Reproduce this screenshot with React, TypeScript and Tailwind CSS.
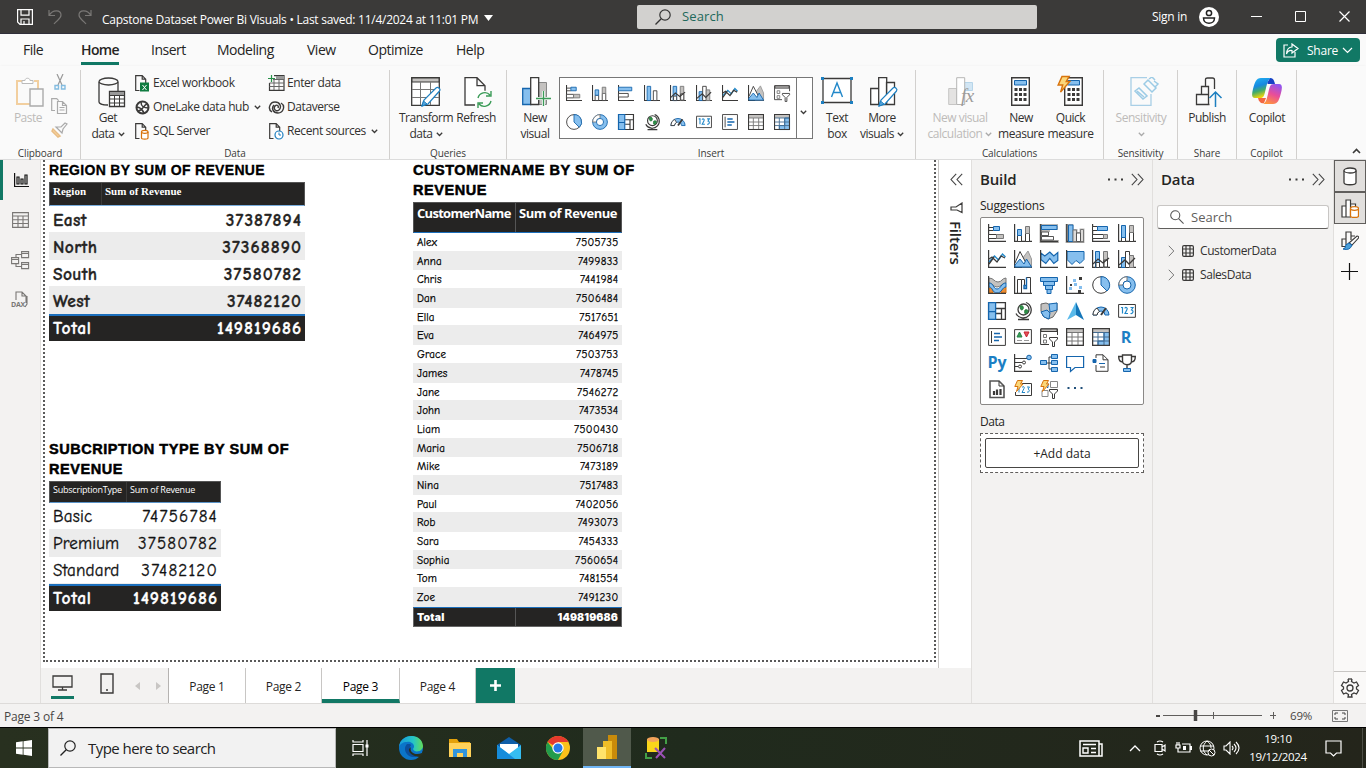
import React from "react";

type Kids = { children?: React.ReactNode };
const K = "#3b3a39";
const D = "#1565ad";
const L = "#86bfee";
const G = "#c4c2c0";
const O = "#d8730c";

function Svg({ w, h, vb, className = "", children }: Kids & { w: number; h?: number; vb?: string; className?: string }) {
  return (
    <svg width={w} height={h ?? w} viewBox={vb ?? `0 0 ${w} ${h ?? w}`} fill="none" stroke={K} className={`shrink-0 ${className}`}>
      {children}
    </svg>
  );
}

const axis = <path d="M.6 0V17.4H18" strokeWidth="1.200" />;
const bolt = <path d="M3.5.5h5L6.5 4H9L2.5 11.5 4 6.500H.8z" fill="#fbd77a" stroke={O} />;
const funnel = <path d="M9.500 9.500h8v1.500l-3 3v4.500h-2V14l-3-3z" fill="#fff" />;

const glyphs: Record<string, React.ReactNode> = {
  stackedBar: <>{axis}<path d="M.5 3.500h5M.5 6.500h5" /><path d="M5.500 2.500h6v4h-6z" fill={L} stroke={D} /><path d="M.5 10.500h8v4h-8z" fill="#fff" /><path d="M8.500 10.500h7v4h-7z" fill={G} stroke="#777" /></>,
  stackedCol: <>{axis}<path d="M3.500 11.500h4v6h-4zM11.500 9.500h4v8h-4z" fill="#fff" /><path d="M3.500 5.500h4v6h-4z" fill={L} stroke={D} /><path d="M11.500 2.500h4v7h-4z" fill={G} stroke="#777" /></>,
  clusterBar: <>{axis}<path d="M.5 2.500h15v4H.5z" fill={L} stroke={D} /><path d="M.5 9.500h11v4H.5z" fill="#fff" /></>,
  clusterCol: <>{axis}<path d="M3.500 1.500h4v16h-4z" fill={L} stroke={D} /><path d="M10.500 6.500h4v11h-4z" fill="#fff" /></>,
  clusterBarSel: <><path d="M-.500 0h18.500v6h-8v2h-1v5h5v3h5v3H-.500z" fill="#b9b7b5" stroke="none" /><path d="M.8 0V17.500H18" strokeWidth="1.300" /><path d="M1.500 1.500h15.500v4H1.500z" fill={L} stroke={D} /><path d="M1.500 8h7v3.500h-7zM1.500 12.500h12v3.500h-12z" fill="#fff" stroke="#555" /></>,
  clusterColSel: <><path d="M-.500 0h8v5h4v3h2V4.500h5V19H-.500z" fill="#b9b7b5" stroke="none" /><path d="M.8 0V17.500H18" strokeWidth="1.300" /><path d="M2.500 1h4.500v16.500H2.500z" fill={L} stroke={D} /><path d="M7 6h3.500v11.500H7zM14.500 5.500h3v12h-3z" fill="#dddbd9" stroke="#777" /><path d="M10.500 9h4v8.500h-4z" fill="#fff" stroke="#555" /></>,
  fullBar: <>{axis}<path d="M.5 2.500h5v4h-5zM.5 10.500h11v4H.5z" fill="#fff" /><path d="M5.500 2.500h10v4h-10z" fill={L} stroke={D} /><path d="M11.500 10.500h4v4h-4z" fill={G} stroke="#777" /></>,
  fullCol: <>{axis}<path d="M3.500 11.500h4v6h-4zM11.500 7.500h4v10h-4z" fill="#fff" /><path d="M3.500 1.500h4v12h-4z" fill={L} stroke={D} /><path d="M11.500 1.500h4v7h-4z" fill={G} stroke="#777" /></>,
  line: <>{axis}<path d="M1 12 6.500 6l4 4 4-6 3 3" stroke="#2188c9" strokeWidth="1.400" /><path d="m1 9 3-2 5 5 4-6 4 2M1 14l5-7" strokeWidth="1.300" /></>,
  area: <>{axis}<path d="m8 9 6-8 3.500 8v8H8z" fill={G} stroke="#999" /><path d="M1 13 6 1.500 12 13" fill="#fff" /><path d="m1 15 5-6 4 5 2.500-5 5 8H1z" fill={L} stroke={D} /></>,
  stackArea: <><path d="m.8 3 4 3 5-4 4 4 4-3.500v8l-4 3-4-5-4 5-5-4z" fill={L} stroke={D} strokeWidth="1.200" />{axis}</>,
  fullArea: <><path d="M1 1.500h17v8l-4 4-4-3-4 4-5-5z" fill={L} stroke={D} />{axis}</>,
  lineStack: <>{axis}<path d="M3.500 1.500h4v16h-4z" fill={L} stroke={D} /><path d="M11.500 1.500h4v16h-4z" fill={G} stroke="#777" /><path d="M4 12.500h3.500v5H4zM12 10h3.500v7H12z" fill="#fff" /><path d="m1 14 5-5 5 4 6-5" strokeWidth="1.300" /></>,
  lineCluster: <>{axis}<path d="M3.500 7.500h4v10h-4z" fill={L} stroke={D} /><path d="M7.500 1.500h4v16h-4z" fill="#fff" /><path d="M11.500 5.500h4v12h-4z" fill={G} stroke="#777" /><path d="m1 15 6-5 4 4 6-6" strokeWidth="1.300" /></>,
  ribbon: <><path d="M1 2c5 0 5 4 9 4s4-4 8-4v5c-4 0-5 4-9 4s-4-4-8-4z" fill={G} stroke="#777" /><path d="M1 12h4v5H1zM13 11h5v6h-5z" fill="#e98b35" stroke={O} /><path d="M1 7c5 0 4 6 8 6s4-6 9-6v4c-4 0-4 6-9 6s-4-6-8-6z" fill={L} stroke={D} />{axis}</>,
  waterfall: <>{axis}<path d="M3.500 17V3.500h4V17M7.500 3.500h3v9M12.500 1.500h4v16M12.500 1.500v9" fill="none" /><path d="M10 9.500h2.500v3H10zM12.500 1.500v9" fill={L} stroke={D} strokeWidth="1.400" /></>,
  funnel: <path d="M.5 1.500h17v4H.5zM3.500 5.500h11v4h-11zM5.500 9.500h7v4h-7zM7 13.500h4v4H7z" fill={L} stroke={D} />,
  scatter: <>{axis}<path d="M7 3h3v3H7zM3 11h3v3H3zM13 10h3v3h-3zM8 7h3v3H8z" fill={L} stroke="none" /><path d="M13 1h3v3h-3zM12 14h3v3h-3zM4 8h2v2H4z" fill={K} stroke="none" /></>,
  pie: <><circle cx="9" cy="9" r="8.300" fill="#fff" /><path d="M9 .7V9l6 6A8.300 8.300 0 0 0 9 .7z" fill={L} stroke={D} /></>,
  donut: <><circle cx="9" cy="9" r="8.300" fill={L} stroke={D} /><path d="M9 .7A8.300 8.300 0 0 0 .7 9H5a4 4 0 0 1 4-4z" fill="#fff" stroke="#777" /><circle cx="9" cy="9" r="4" fill="#fff" stroke={D} /></>,
  treemap: <><path d="M.6.6h16.800v16.800H.6zM8 6.500h9.500M8 11.500h5.500M13.500 6.500v11" fill="#fff" strokeWidth="1.300" /><path d="M.6.6h7v9h-7zM.6 9.600h7v7.800h-7z" fill={L} stroke={D} strokeWidth="1.300" /></>,
  globe: <><circle cx="9.500" cy="7.500" r="5.500" fill="#fff" strokeWidth="1.300" /><path d="M6 4c3-1 4 1 3 3s-3 1-3-3zM11 8c3-1 4 1 2 3s-3 0-2-3z" fill="#2b9348" stroke="#2b7a3d" /><path d="M12 .5a8 8 0 1 1-10 11M9 15.500v2M4 17.500h11" strokeWidth="1.300" /></>,
  shape: <><path d="m1 2 5-1 5 2 6-2v8l-4 6-5 2-5-3-2-5z" fill={G} stroke="#666" /><path d="m1 10 6-2 3 3-1 6-5-2zM9 2l8-1v7l-7 2z" fill={L} stroke={D} /></>,
  azure: <><path d="M10 0 18 18 10 13z" fill="#1476b9" stroke="none" /><path d="M10 0v13L1 18z" fill="#59b9ea" stroke="none" /></>,
  gauge: <><path d="M1 13a8 8 0 0 1 16 0h-4a4 4 0 0 0-8 0z" fill={L} stroke={D} /><path d="M1 13a8 8 0 0 1 4-7l2.500 3.500A4 4 0 0 0 5 13z" fill="#fff" /><path d="m9 13 5-7" strokeWidth="2" /></>,
  card: <><path d="M.6 2.500h16.800v12.800H.6z" fill="#fff" /><path d="M3 5.500h1.500v6M7 6.500c0-2 3-1 2 1l-2 4h3M12.500 5.500H15l-1.500 2.500c3 1 1 4-1 3.500" stroke="#2188c9" strokeWidth="1.200" /></>,
  multi: <><path d="M.6.6h16.800v16.800H.6z" fill="#fff" /><path d="M3.500 3v12" /><path d="M6 5.500h6M6 9h8M6 12.500h5" stroke={D} strokeWidth="1.700" /></>,
  kpi: <><path d="M.6 1.600h16.800v13.800H.6z" fill="#fff" /><path d="m3 9 2.500-5L8 9z" fill="#3aa25a" stroke="#278146" /><path d="m10 4 2.500 5L15 4z" fill="#e8505b" stroke="#c4262e" /><path d="M3 12.500h5M10 12.500h5" stroke="#999" /></>,
  slicer: <><path d="M17.500 7V.8H.6v15.700H9" fill="#fff" /><path d="M1 1h16v2.500H1z" fill={G} /><path d="M3.500 6.500h3v3h-3zM3.500 12h3v3h-3z" stroke="#777" />{funnel}</>,
  table: <><path d="M.6.6h16.800v16.800H.6z" fill="#fff" /><path d="M1 1h16v3.500H1z" fill={G} stroke="none" /><path d="M.6 4.500h17M.6 9h17M.6 13h17M6 4.500v13M12 4.500v13" stroke="#777" /><path d="M.6.6h16.800v16.800H.6z" strokeWidth="1.200" /></>,
  matrix: <><path d="M.6.6h16.800v16.800H.6z" fill="#fff" /><path d="M1 1h16v3.500H1z" fill={G} stroke="none" /><path d="M12 4.500h5.500v13H6V13h6z" fill={L} stroke={D} /><path d="M.6 4.500h17M.6 9h17M.6 13h17M6 4.500v13M12 4.500v13" stroke="#456d91" /><path d="M.6.6h16.800v16.800H.6z" strokeWidth="1.200" /></>,
  r: <text x="8" y="15" textAnchor="middle" fill="#1c7fc4" stroke="none" className="text-[16px] font-bold">R</text>,
  py: <text x="9" y="14" textAnchor="middle" fill="#1c7fc4" stroke="none" className="text-[16px] font-bold">Py</text>,
  influencers: <>{axis}<path d="M1 4.500h12M1 8.500h7M1 12.500h3" /><circle cx="15" cy="3.500" r="2.300" fill={L} stroke={D} /><circle cx="10" cy="8.500" r="1.500" /><circle cx="6" cy="12.500" r="1.500" /></>,
  decomp: <><path d="M6 9h6M9 3v12M9 3h3M9 15h3" /><path d="M.5 6.500h6v4h-6zM11.500.5h6v4h-6zM11.500 6.500h6v4h-6zM11.500 13.500h6v4h-6z" fill={L} stroke={D} /></>,
  qna: <path d="M.6 2.500h17v11H9l-4.500 4v-4H.6z" fill="#fff" stroke={D} strokeWidth="1.200" />,
  narrative: <><path d="M4 4V.8h7l5 5v11.500H4V11" fill="#fff" /><path d="M11 .8v5h5M8 13h5" /><path d="M1 5.500h3v3H1z" fill={D} stroke={D} /><path d="M7 9.500h6" stroke={D} /></>,
  trophy: <><path d="M4.500 1h9v6c0 5-9 5-9 0zM4.500 2.500H.7c0 4 1 5.500 4 5.500M13.500 2.500h3.800c0 4-1 5.500-4 5.500M9 11v4" strokeWidth="1.400" fill="#fff" /><path d="M5.500 14.500h7v3h-7z" fill={L} stroke={D} /></>,
  paginated: <><path d="M2 1h9l5 5v11.500H2z" fill="#fff" stroke="#555" strokeWidth="1.600" /><path d="M11 1v5h5" /><path d="M6 15v-4M9 15V9.500M12.500 15v-6" strokeWidth="2.200" /></>,
  cardNew: <><path d="M8 3.500h9.500v12H1.500V12" fill="#fff" /><path d="M5 7v5.500M8 7.500c1-1.500 3-1 2 1L8 12.500h3M13 7h2.500L14 9c2.500 1 1 4-1 3" stroke="#2188c9" />{bolt}</>,
  slicerNew: <><path d="M10.500 1.500h7v6h-7zM2 10.500h6v6H2z" stroke="#888" /><path d="M7 7.500h1v-4" stroke={D} />{bolt}{funnel}</>,
  more: <path d="M1.500 8h2M8 8h2M14.500 8h2" stroke="#1f4e79" strokeWidth="1.800" />,
};

const ribbonGallery = ["stackedBar", "stackedCol", "clusterBar", "clusterCol", "lineStack", "lineCluster", "line", "area", "slicer", "pie", "donut", "treemap", "globe", "gauge", "card", "multi", "table", "matrix"];
const buildGallery = ["stackedBar", "stackedCol", "clusterBarSel", "clusterColSel", "fullBar", "fullCol", "line", "area", "stackArea", "fullArea", "lineStack", "lineCluster", "ribbon", "waterfall", "funnel", "scatter", "pie", "donut", "treemap", "globe", "shape", "azure", "gauge", "card", "multi", "kpi", "slicer", "table", "matrix", "r", "py", "influencers", "decomp", "qna", "narrative", "trophy", "paginated", "cardNew", "slicerNew", "more"];

const Glyph = ({ name, size }: { name: string; size: number }) => (
  <Svg w={size} vb="0 0 18 18" className="overflow-visible">{glyphs[name]}</Svg>
);

const Down = ({ c = K }: { c?: string }) => (
  <Svg w={7} h={5}><path d="m.8.8 2.700 2.700L6.200.8" stroke={c} strokeWidth="1.300" /></Svg>
);
const Search = ({ s = 16, c = "#222", flip = false }: { s?: number; c?: string; flip?: boolean }) => (
  <Svg w={s} vb="0 0 16 16" className={flip ? "-scale-x-100" : ""}><circle cx="6" cy="6" r="5.200" stroke={c} strokeWidth="1.200" /><path d="m9.800 9.800 5.700 5.700" stroke={c} strokeWidth="1.300" /></Svg>
);
const Pencil = ({ x, y }: { x: number; y: number }) => (
  <g transform={`translate(${x} ${y})`}>
    <path d="m1 19 2-6L15 1c2-1.500 5 1 3.500 3L7 17z" fill="#fff" stroke="#1d7fc0" strokeWidth="1.200" />
    <path d="m1 19 1.500-5 3.500 3z" fill="#58a6dd" stroke="#1d7fc0" />
  </g>
);
const Chevrons = ({ left = false }: { left?: boolean }) => (
  <Svg w={13} h={13} className={left ? "rotate-180" : ""}><path d="m.8.8 5.200 5.700-5.200 5.700M6.800.8 12 6.500l-5.200 5.700" stroke="#444" strokeWidth="1.100" /></Svg>
);

const Group = ({ label, className, children }: Kids & { label: string; className: string }) => (
  <section className={`flex shrink-0 flex-col border-r border-[#d2d0ce] ${className}`}>
    <div className="flex h-[77px] pt-1">{children}</div>
    <div className="text-center text-[10px] leading-[12px] tracking-[-0.01em] text-[#3b3a39]"><span className="inline-block pt-[1px]">{label}</span></div>
  </section>
);
const Big = ({ icon, a, b, down, className, off }: { icon: React.ReactNode; a: string; b?: string; down?: boolean; className: string; off?: boolean }) => (
  <div className={`flex shrink-0 flex-col items-center whitespace-nowrap text-[12px] leading-4 tracking-[-0.04em] ${off ? "text-[#bdbbb9]" : "text-[#323130]"} ${className}`}>
    <div className="flex h-9 items-start justify-center pt-[3px]">{icon}</div>
    <span>{a}</span>
    <span className="flex h-4 items-center gap-[3px]">{b}{down && <Down c={off ? "#aaa" : K} />}</span>
  </div>
);
const Small = ({ icon, t, down }: { icon: React.ReactNode; t: string; down?: boolean }) => (
  <div className="flex h-6 items-center whitespace-nowrap text-[12px] tracking-[-0.035em] text-[#323130]">
    <span className="mr-[3px] flex w-4 shrink-0 justify-center">{icon}</span>{t}{down && <span className="ml-[5px]"><Down /></span>}
  </div>
);

const tabs: [string, string][] = [["File", "w-[58px]"], ["Home", "w-[70px]"], ["Insert", "w-[66px]"], ["Modeling", "w-[90px]"], ["View", "w-[61px]"], ["Optimize", "w-[88px]"], ["Help", "w-[60px]"]];

const Calc = () => (
  <Svg w={19} h={29}>
    <path d="M.7.7h17.600v27.600H.7z" fill="#fff" strokeWidth="1.400" /><path d="M3.500 3.500h12v4.500h-12z" fill={L} stroke={D} />
    <path d="M3.500 12.500h12M3.500 17.500h12M3.500 22.500h12" strokeWidth="3" strokeDasharray="3 1.500" />
  </Svg>
);
const Doc = ({ children }: Kids) => (
  <Svg w={16} h={17}><path d="M5.500 15.500H1.700V.7h6.500l3.500 3.500v4M8.200.7v3.500h3.500" strokeWidth="1.200" />{children}</Svg>
);

function Ribbon() {
  return (
    <div className="flex h-[94px] shrink-0 border-b border-[#dcdcdc] bg-[#fafafa] pt-[4px] shadow-sm">
      <Group label="Clipboard" className="w-[81px]">
        <Big off className="w-[56px]" a="Paste" icon={<Svg w={28} h={31} className="translate-x-[2px]"><path d="M6 4H1v23h13" stroke="#f2cf9f" strokeWidth="2" /><path d="M18 4h4v8" stroke="#f2cf9f" strokeWidth="2" /><path d="M6 6.500v-3h3c0-3 5-3 5 0h3v3z" fill="#fff" stroke="#bbb" /><path d="M14 12h13v17H14z" fill="#fafafa" stroke="#aaa" strokeWidth="1.400" /></Svg>} />
        <div className="-ml-[5px] -mt-1 flex flex-col items-center gap-2 pt-[4px]">
          <Svg w={16}><path d="m5 0 5 11M11 0 6 11" stroke="#999" strokeWidth="1.200" /><path d="M3 11.500h3.500V15H3zM9.500 11.500H13V15H9.500z" stroke="#83bce0" strokeWidth="1.400" /></Svg>
          <Svg w={17} h={16}><path d="M4 12.500H.7V.7h5l2 2M6.500 3.500h5l4 4v8h-9zM11.500 3.500v4h4M8.500 9.500h5M8.500 12h5" stroke="#aaa" strokeWidth="1.200" /></Svg>
          <Svg w={17} h={16}><path d="m2 7 7 7-2 1-6-6z" fill="#fbd9aa" stroke="#e8bd85" strokeWidth="1.500" /><path d="m5 5 6 6 1-4 4-5-2-1-4 4z" fill="#fafafa" stroke="#aaa" strokeWidth="1.200" /></Svg>
        </div>
      </Group>
      <Group label="Data" className="w-[309px]">
        <Big className="w-[54px]" a="Get" b="data" down icon={<Svg w={29} h={31} className="translate-x-[3px]"><path d="M2 5v20c0 2 5 3 9 3M21 5v9" strokeWidth="1.300" /><ellipse cx="11.500" cy="4.500" rx="9.500" ry="3.500" strokeWidth="1.300" /><path d="M12.500 14.500h15v15h-15z" fill="#fff" strokeWidth="1.300" /><path d="M13 15h14v3H13z" fill="#999" stroke="none" /><path d="M12.500 18.500h15M12.500 22h15M12.500 26h15M17.500 18v11M22.500 18v11" /></Svg>} />
        <div className="-ml-px -mt-[3px] flex w-[134px] flex-col">
          <Small t="Excel workbook" icon={<Doc><path d="M6 7.500h9v9H6z" fill="#107c41" stroke="none" /><path d="m8.500 10 4 5m0-5-4 5" stroke="#fff" /></Doc>} />
          <Small t="OneLake data hub" down icon={<Svg w={15}><circle cx="7.500" cy="7.500" r="6" strokeWidth="2" /><path d="M1 7c5 0 7 3 8 7M6 2c0 5 3 6 8 6M3 11c5 0 5-6 9-7" strokeWidth="1.500" /></Svg>} />
          <Small t="SQL Server" icon={<Doc><path d="M7.500 9v6c0 1.500 6.500 1.500 6.500 0V9" fill="#fff" stroke={O} strokeWidth="1.200" /><ellipse cx="10.750" cy="8.800" rx="3.250" ry="1.500" fill="#fff" stroke={O} strokeWidth="1.200" /></Doc>} />
        </div>
        <div className="-mt-[3px] flex flex-col">
          <Small t="Enter data" icon={<Svg w={17} h={16}><path d="M6 .7h10v14.600H1.500V8" strokeWidth="1.200" /><path d="M8 1h8v3H8z" fill="#999" stroke="none" /><path d="M5 4.500h11M1.500 8h14.500M1.500 11.500h14.500M6 5v10M11 4v11" stroke="#666" /><path d="M3.500 0v7M0 3.500h7" stroke="#279048" strokeWidth="1.200" /></Svg>} />
          <Small t="Dataverse" icon={<Svg w={17} h={15}><path d="M4 12C-1 9 2 2 7 2c5 0 7 5 4 8-3 2-6-1-4-4 2-2 4 0 3 2M13 3c5 3 2 10-3 10-5 0-7-5-4-8" strokeWidth="1.400" /></Svg>} />
          <Small t="Recent sources" down icon={<Doc><circle cx="11" cy="12" r="4" fill="#fff" stroke="#1d7fc0" strokeWidth="1.200" /><path d="M11 9.500V12h2" stroke="#1d7fc0" /></Doc>} />
        </div>
      </Group>
      <Group label="Queries" className="w-[117px]">
        <Big className="w-[72px]" a="Transform" b="data" down icon={<Svg w={30} h={31}><path d="M.7.7h27.600v27.600H.7z" fill="#fff" strokeWidth="1.300" /><path d="M1 1h27v4H1z" fill={G} /><path d="M1 12.500h27M1 20.500h27M9.500 5v23M19.500 5v23" stroke="#777" /><Pencil x={10} y={10} /></Svg>} />
        <Big className="w-[28px]" a="Refresh" icon={<Svg w={28} h={31} className="translate-x-[2px]"><path d="M11 28H1V.7h12l8 8v5M13 .7v8h8" strokeWidth="1.300" fill="#fff" /><path d="M14 21a7 7 0 0 1 12-3M27 24a7 7 0 0 1-12 3M27 14v5h-5M14 31v-5h5" stroke="#3a9b57" strokeWidth="1.400" /></Svg>} />
      </Group>
      <Group label="Insert" className="w-[409px]">
        <Big className="mr-[-4px] w-[56px]" a="New" b="visual" icon={<Svg w={29} h={31} className="translate-x-px"><path d="M.7 11.500h8v16h-8z" fill={L} stroke={D} strokeWidth="1.300" /><path d="M16.500 5.500h8v22h-8z" fill={G} stroke="#888" /><path d="M8.700.7h8v26.800h-8z" fill="#fff" strokeWidth="1.300" /><path d="M21.500 14v15M14 21.500h15" stroke="#fafafa" strokeWidth="3" /><path d="M21.500 14v15M14 21.500h15" stroke="#3a9b57" strokeWidth="1.300" /></Svg>} />
        <div className="mt-[3px] flex h-[62px] w-[254px] border border-[#777] bg-white">
          <div className="grid w-[236px] grid-cols-[repeat(9,26px)] content-start gap-y-[13px] pl-[6px] pt-[7px]">
            {ribbonGallery.map((n) => <Glyph key={n} name={n} size={16} />)}
          </div>
          <div className="flex w-[16px] shrink-0 items-center justify-center border-l border-[#777] pr-[2px] pt-2"><Down /></div>
        </div>
        <Big className="w-[48px]" a="Text" b="box" icon={<Svg w={32} h={27}><path d="M2 1.500h28v24H2z" fill="#fff" strokeWidth="1.300" /><path d="M0 0h3v3H0zM29 0h3v3h-3zM0 24h3v3H0zM29 24h3v3h-3z" fill="#1d7fc0" stroke="none" /><path d="m10.500 20 5.500-14 5.500 14M12.500 15.500h7" stroke="#2188c9" strokeWidth="1.400" /></Svg>} />
        <Big className="w-[42px]" a="More" b="visuals" down icon={<Svg w={29} h={31} className="translate-x-[2px]"><path d="M.7 11.500h8v16h-8zM16.500 5.500h8v22h-8zM8.700.7h8v26.800h-8z" fill="#fff" strokeWidth="1.300" /><Pencil x={8} y={10} /></Svg>} />
      </Group>
      <Group label="Calculations" className="w-[188px]">
        <Big off className="w-[88px]" a="New visual" b="calculation" down icon={<Svg w={29} h={31} className="translate-x-[2px]"><path d="M.7 11.500h8v16h-8z" fill="#e4e3e2" stroke="#c6c5c4" /><path d="M16.500 5.500h8v8h-8z" fill="#d2e6f4" stroke="#b6d5e9" /><path d="M8.700.7h8v26.800h-8z" fill="#fff" stroke="#b6b5b4" /><text x="13" y="25" fill="#9c9b9a" stroke="none" className="font-['Liberation_Serif'] text-[19px] italic">fx</text></Svg>} />
        <Big className="w-[34px]" a="New" b="measure" icon={<div className="-translate-x-px"><Calc /></div>} />
        <Big className="w-[65px]" a="Quick" b="measure" icon={<div className="relative pl-[5px]"><Calc /><Svg w={14} h={20} vb="0 0 9.800 13" className="absolute -top-[2px] left-[-2px] overflow-visible">{bolt}</Svg></div>} />
      </Group>
      <Group label="Sensitivity" className="w-[74px]">
        <Big off className="w-[74px]" a="Sensitivity" down icon={<Svg w={29} h={30} className="translate-x-[3px]"><path d="M17 .7H1v27.600h20V17" stroke="#a9cfe6" strokeWidth="1.300" /><path d="m5 14 4-3 8 8-4 3zM14 7l4-4 8 8-4 4zM19 2l3-2 3 3M24 4l4 3-3 3M7 14l7 6" stroke="#9ccbe5" strokeWidth="1.500" /></Svg>} />
      </Group>
      <Group label="Share" className="w-[59px]">
        <Big className="w-[58px]" a="Publish" icon={<Svg w={28} h={32} className="translate-x-[2px]"><path d="M14.500 27.500h-13v-10h5M6.500 17V9.500h4M10.500 9V2.500q0-1.500 2-1.500h5q2 0 2 2v9M13.500 27V17.500H3M13.500 17V9.500h-4" strokeWidth="1.300" /><path d="M20.500 30V15M14.500 21l6-6 6 6" stroke="#1d7fc0" strokeWidth="1.500" /></Svg>} />
      </Group>
      <Group label="Copilot" className="w-[60px]">
        <Big className="w-[60px]" a="Copilot" icon={
          <Svg w={30} h={28}>
            <defs>
              <linearGradient id="ca" x2=".3" y2="1"><stop stopColor="#23b4f3" /><stop offset=".45" stopColor="#1689e0" /><stop offset=".7" stopColor="#42ac68" /><stop offset="1" stopColor="#efd40a" /></linearGradient>
              <linearGradient id="cb" x1=".7" x2=".3" y2="1"><stop stopColor="#9155ef" /><stop offset=".5" stopColor="#e94d99" /><stop offset="1" stopColor="#ff943d" /></linearGradient>
            </defs>
            <path d="M15 6 18 1c3 0 4 2 5 6h-7z" fill="#1741c5" stroke="none" />
            <path d="M9 1h10c-3 1-4 6-5 10-2 8-2 10-6 10H3c-4 0-3-5-2-9C3 5 4 1 9 1z" fill="url(#ca)" stroke="none" />
            <path d="M21 27H11c3-1 4-6 5-10 2-8 2-10 6-10h5c4 0 3 5 2 9-2 7-3 11-8 11z" fill="url(#cb)" stroke="none" />
            <path d="M6 21h8l-2 5c-3 1-5-1-6-5z" fill="#f26743" stroke="none" />
          </Svg>} />
      </Group>
      <div className="flex flex-1 items-end justify-end pb-[5px] pr-[5px]"><Svg w={9} h={6}><path d="m1 5 3.500-3.500L8 5" strokeWidth="1.600" /></Svg></div>
    </div>
  );
}

const comic = "font-['Comic_Sans_MS','Comic_Neue','Noto_Sans',sans-serif]";
const regions = [["East", "37387894"], ["North", "37368890"], ["South", "37580782"], ["West", "37482120"]];
const plans = [["Basic", "74756784"], ["Premium", "37580782"], ["Standard", "37482120"]];
const customers = "Alex 7505735,Anna 7499833,Chris 7441984,Dan 7506484,Ella 7517651,Eva 7464975,Grace 7503753,James 7478745,Jane 7546272,John 7473534,Liam 7500430,Maria 7506718,Mike 7473189,Nina 7517483,Paul 7402056,Rob 7493073,Sara 7454333,Sophia 7560654,Tom 7481554,Zoe 7491230".split(",").map((r) => r.split(" "));

const Title = ({ wide = false, children }: Kids & { wide?: boolean }) => (
  <h2 className={`whitespace-nowrap font-['Liberation_Sans'] font-bold leading-5 text-black ${wide ? "text-[14.500px] tracking-[0.037em] [-webkit-text-stroke:0.5px_#000]" : "text-[14px] tracking-[0.023em] [-webkit-text-stroke:0.3px_#000]"}`}>{children}</h2>
);

function Canvas() {
  return (
    <div className="flex h-[508px] w-[930px] shrink-0 bg-white">
      <div className="ml-[2px] flex h-[502px] w-[893px] border-x-2 border-b-2 border-dotted border-[#5a5a5a] pl-1">
        <div className="flex w-[364px] flex-col">
          <Title>REGION BY SUM OF REVENUE</Title>
          <div className="mt-[2px] w-[256px]">
            <div className="flex h-[24px] border border-b-[#7aaede] border-[#555] bg-[#252423] font-['Liberation_Serif'] text-[11px] font-bold leading-4 text-white">
              <span className="w-[52px] border-r border-[#3a3938] pl-[3px]">Region</span><span className="pl-[3px]">Sum of Revenue</span>
            </div>
            <div className={`${comic} text-[17.500px] font-bold leading-[29px] text-[#252423] [-webkit-text-stroke:0.3px]`}>
              {regions.map(([a, b], i) => <div key={a} className={`flex h-[27px] justify-between border-b border-[#ececec] pl-1 pr-[3px] ${i % 2 ? "bg-[#ececec]" : ""}`}><span className="tracking-[0.02em]">{a}</span><span className="tracking-[0.060em]">{b}</span></div>)}
              <div className="flex h-[27px] justify-between border-t-2 border-[#1c6fbc] bg-[#252423] pl-1 pr-[3px] leading-[25px] text-white"><span className="tracking-[0.04em]">Total</span><span className="tracking-[0.055em]">149819686</span></div>
            </div>
          </div>
          <div className="mt-[98px]"><Title wide>SUBCRIPTION TYPE BY SUM OF<br />REVENUE</Title></div>
          <div className="mt-[2px] w-[172px]">
            <div className="flex h-[22px] border border-b-[#5b94c9] border-[#555] bg-[#252423] text-[9px] leading-4 tracking-[-0.025em] text-white">
              <span className="w-[77px] border-r border-[#3a3938] pl-[3px]">SubscriptionType</span><span className="pl-[3px]">Sum of Revenue</span>
            </div>
            <div className={`${comic} text-[17px] leading-[28px] text-[#111] [-webkit-text-stroke:0.300px]`}>
              {plans.map(([a, b], i) => <div key={a} className={`flex h-[27px] justify-between border-b border-[#ececec] pl-1 pr-[3px] ${i % 2 ? "bg-[#ececec]" : ""}`}><span className="tracking-[0.01em]">{a}</span><span className="tracking-[0.070em]">{b}</span></div>)}
              <div className="flex h-[27px] justify-between border-t-2 border-[#1c6fbc] bg-[#252423] pl-1 pr-[3px] text-[17.500px] font-bold leading-[25px] text-white"><span className="tracking-[0.04em]">Total</span><span className="tracking-[0.055em]">149819686</span></div>
            </div>
          </div>
        </div>
        <div className="w-[240px]">
          <Title wide>CUSTOMERNAME BY SUM OF<br />REVENUE</Title>
          <div className="mt-[2px] w-[209px]">
            <div className="flex h-[31px] whitespace-nowrap border border-b-[#1c6fbc] border-[#555] bg-[#252423] text-[13px] font-bold leading-[21px] tracking-[-0.035em] text-white">
              <span className="w-[102px] shrink-0 border-r border-[#555] pl-[3px] tracking-[-0.055em]">CustomerName</span><span className="pl-[3px]">Sum of Revenue</span>
            </div>
            <div className={`${comic} text-[11px] leading-[19.500px] text-[#000] [-webkit-text-stroke:0.250px]`}>
              {customers.map(([a, b], i) => <div key={a} className={`flex h-[18.700px] justify-between border-b border-[#ececec] pl-1 pr-[3.500px] ${i % 2 ? "bg-[#ececec]" : ""}`}><span className="tracking-[0.01em]">{a}</span><span className="tracking-[0.030em]">{b}</span></div>)}
            </div>
            <div className="flex h-[20px] border border-t-[#1c6fbc] border-[#666] bg-[#252423] font-['Inter'] text-[10.5px] font-black leading-[19px] text-white">
              <span className="w-[102px] border-r border-[#555] pl-[3px] tracking-[0.02em]">Total</span><span className="ml-auto pr-[3px] tracking-[0.01em]">149819686</span>
            </div>
          </div>
        </div>
      </div>
      <div className="ml-[2px] h-full border-l border-[#c8c6c4]" />
      <div className="flex flex-1 flex-col items-center pl-[2px] pt-[13px]">
        <Chevrons left />
        <Svg w={13} h={12} className="mt-[16px]"><path d="M12 1v9.500L7 8H1V5h5z" strokeWidth="1.200" /></Svg>
        <div className="mt-[7px] text-[15px] font-semibold leading-[18px] tracking-[-0.01em] text-[#252423] [writing-mode:vertical-rl]">Filters</div>
      </div>
    </div>
  );
}

const pages: [string, string][] = [["Page 1", "w-[77px]"], ["Page 2", "w-[76px]"], ["Page 3", "w-[78px] border-b-4 border-b-[#117865] text-black"], ["Page 4", "w-[76px]"]];

function PageTabs() {
  return (
    <div className="flex h-[35px] bg-[#f3f2f1]">
      <div className="flex w-[127px] pl-[10px]">
        <div className="flex h-[31px] w-[23px] flex-col items-center border-b-[3px] border-[#117865] pt-[7px]"><Svg w={21} h={16}><path d="M1 1h19v11H1zM10.500 12v3M6 15h9" strokeWidth="1.300" /></Svg></div>
        <Svg w={14} h={21} className="ml-[26px] mt-[5px]"><path d="M1 1h12v19H1zM6 17h2" strokeWidth="1.400" /></Svg>
        <Svg w={26} h={8} className="ml-[21px] mt-[14px]"><path d="M5 0v8L0 4zM21 0v8l5-4z" fill="#c8c6c4" stroke="none" /></Svg>
      </div>
      <div className="flex border-l border-[#b5b3b1]">
        {pages.map(([p, w]) => <div key={p} className={`border-r border-r-[#c8c6c4] bg-white pt-[10px] text-center text-[12px] leading-[17px] tracking-[-0.025em] text-[#252423] ${w}`}>{p}</div>)}
        <div className="flex w-[39px] items-center justify-center bg-[#117865]"><Svg w={11}><path d="M5.500 0v11M0 5.500h11" stroke="#fff" strokeWidth="2.600" /></Svg></div>
      </div>
    </div>
  );
}

const PaneHead = ({ t }: { t: string }) => (
  <div className="flex h-[38px] items-center pl-2 pr-[8px]">
    <span className="flex-1 text-[15px] font-semibold tracking-[-0.01em] text-[#252423]">{t}</span>
    <Svg w={15} h={3} className="mr-[8px]"><path d="M0 1.500h2M6.500 1.500h2M13 1.500h2" strokeWidth="2" /></Svg>
    <Chevrons />
  </div>
);

function Panes() {
  return (
    <>
      <aside className="flex w-[181px] shrink-0 flex-col border-l border-[#e1dfdd] bg-[#f3f2f1]">
        <PaneHead t="Build" />
        <div className="h-[19px] pl-2 text-[12px] leading-4 tracking-[-0.02em] text-[#252423]">Suggestions</div>
        <div className="ml-2 grid h-[188px] w-[164px] grid-cols-[repeat(6,26px)] content-start gap-y-2 rounded-[2px] border border-[#8a8886] bg-white pl-[7px] pt-[6px]">
          {buildGallery.map((n) => <Glyph key={n} name={n} size={18} />)}
        </div>
        <div className="mt-[9px] pl-2 text-[12px] leading-4 tracking-[-0.04em] text-[#252423]">Data</div>
        <div className="ml-2 mt-[3px] flex h-[40px] w-[164px] items-center justify-center border border-dashed border-[#605e5c] bg-white">
          <div className="h-[30px] w-[154px] rounded-[2px] border border-[#484644] bg-white text-center text-[12px] leading-[30px] text-[#252423]">+Add data</div>
        </div>
      </aside>
      <aside className="flex w-[181px] shrink-0 flex-col border-l border-[#e1dfdd] bg-[#f3f2f1]">
        <PaneHead t="Data" />
        <div className="ml-1 mt-[7px] flex h-[24px] w-[172px] items-center rounded-[3px] border border-b-[#605e5c] border-[#c8c6c4] bg-white pl-3 text-[13px] text-[#605e5c]"><Search s={14} c="#555" /><span className="ml-[7px] pt-px">Search</span></div>
        <div className="mt-[10px] flex flex-col">
          {["CustomerData", "SalesData"].map((t) => (
            <div key={t} className="flex h-6 items-center pl-[15px] text-[12px] tracking-[-0.035em] text-[#323130]">
              <Svg w={7} h={12}><path d="m.8.8 5 5.200-5 5.200" stroke="#777" /></Svg>
              <Svg w={12} className="ml-[7px] mr-[6px]"><path d="M2 .6h8q1.400 0 1.400 1.400v8q0 1.400-1.400 1.400H2Q.6 11.400.6 10V2Q.6.6 2 .6zM4 .6v10.800M8 .6v10.800M.6 4h10.800M.6 8h10.800" strokeWidth="1.200" /></Svg>{t}
            </div>
          ))}
        </div>
      </aside>
      <aside className="flex w-[33px] shrink-0 flex-col items-center border-l border-[#e1dfdd] bg-[#faf9f8]">
        <div className="flex h-8 w-full items-center justify-center border border-[#605e5c] bg-[#e1dfdd]"><Svg w={14} h={19}><path d="M1 3.500v12c0 3 12 3 12 0v-12" fill="#fff" strokeWidth="1.300" /><ellipse cx="7" cy="3.500" rx="6" ry="2.500" fill="#fff" strokeWidth="1.300" /></Svg></div>
        <div className="flex h-8 w-full items-center justify-center border border-[#605e5c] bg-[#e1dfdd]"><Svg w={18} h={19}><path d="M1 7h4v11H1zM5 1h4.500v17H5zM9.500 5h5v4" fill="#fff" strokeWidth="1.200" /><path d="M9.500 10v7c0 2 8 2 8 0v-7" fill="#fff" stroke={O} strokeWidth="1.300" /><ellipse cx="13.500" cy="9.500" rx="4" ry="1.800" fill="#fff" stroke={O} strokeWidth="1.300" /></Svg></div>
        <Svg w={18} h={20} className="mt-[7px]"><path d="M4.500 15.500H1V8h4M5 14V1h5v8M10 5h4" strokeWidth="1.200" /><path d="m8 12 8-7q2 0 1.500 2L11 14z" fill="#fff" strokeWidth="1.100" /><path d="M8 12q-4 1-4 5l-2 1q7 2 9-4z" fill="#4b9fd8" stroke={D} /></Svg>
        <Svg w={17} className="mr-px mt-[12px]"><path d="M8.500 0v17M0 8.500h17" stroke="#111" strokeWidth="1.200" /></Svg>
        <div className="mt-auto flex h-8 w-full items-center justify-center border-t border-[#c8c6c4]"><Svg w={20} vb="0 0 20 20"><path d="m8 1 .5 2.500-2.500 1.500-2.500-1L1.500 7.500 3.500 9v2l-2 1.500 2 3.500 2.500-1 2.500 1.500L8 19h4l-.5-2.500L14 15l2.500 1 2-3.500-2-1.500V9l2-1.500-2-3.500L14 5l-2.500-1.500L12 1" strokeWidth="1.300" /><path d="M8 1h4" strokeWidth="1.300" /><circle cx="10" cy="10" r="3" strokeWidth="1.300" /></Svg></div>
      </aside>
    </>
  );
}

function Rail() {
  return (
    <nav className="flex w-[41px] shrink-0 flex-col items-center border-r border-[#e1dfdd] bg-[#f3f2f1]">
      <div className="flex h-10 w-full items-center border-l-[3px] border-[#117865] pl-[11px]"><Svg w={15} h={15}><path d="M.6 0v13.500H15M3 4h2v7H3zM7 6h2v5H7zM11 2h2v9h-2z" stroke="#111" strokeWidth="1.200" /></Svg></div>
      <div className="flex h-10 items-center pl-px"><Svg w={17} h={16}><path d="M.6.6h15.800v14.800H.6zM.6 4h15.800M.6 7.700h15.800M.6 11.500h15.800M6 4v11M11 4v11" stroke="#797775" strokeWidth="1.100" /></Svg></div>
      <div className="flex h-10 items-center pl-px"><Svg w={19} h={19}><path d="M.6 6.600h7v6h-7zM.6 8.500h7M10.600.6h7v6h-7zM10.600 2.500h7M10.600 11.600h7v6h-7zM10.600 13.500h7M5 6V3.500h5.500M5 12.500v3h5.500" stroke="#797775" strokeWidth="1.100" /></Svg></div>
      <div className="flex h-10 items-center"><Svg w={19} h={18}><path d="M5 9V1h6l4 4v7M11 1v4h4M16 5v8l-2 3" stroke="#797775" strokeWidth="1.100" /><text x="0" y="16" fill="#797775" stroke="none" className="text-[7px] font-bold tracking-[-0.04em]">DAX</text></Svg></div>
    </nav>
  );
}

function Taskbar() {
  return (
    <footer className="flex h-[41px] border-t border-black bg-linear-to-r from-[#28301f] via-[#202b1d] to-[#24251b] text-white">
      <div className="flex w-[48px] items-center justify-center"><Svg w={16}><path d="m0 2.200 6.700-.9v6.200H0zM7.500 1.200 16 0v7.500H7.500zM0 8.400h6.700v6.300L0 13.800zM7.500 8.400H16V16l-8.500-1.200z" fill="#fff" stroke="none" /></Svg></div>
      <div className="flex w-[288px] items-center border border-[#b8b8b8] bg-[#f2f2f2] pl-[11px] text-[15px] tracking-[-0.037em] text-[#222]"><Search flip /><span className="ml-[12px]">Type here to search</span></div>
      <div className="flex w-[48px] items-center justify-center"><Svg w={17} h={16}><path d="M1 0v2h10V0M1 4.500h10v7H1zM1 16v-2h10v2M15 0v16" stroke="#fff" strokeWidth="1.200" /><path d="M13.500 4.500h3v3h-3z" fill="#fff" stroke="none" /></Svg></div>
      <div className="flex w-[54px] items-center justify-center"><Svg w={24}>
        <defs><linearGradient id="ea" x2="1"><stop stopColor="#169ade" /><stop offset=".6" stopColor="#26c6c5" /><stop offset="1" stopColor="#63dc57" /></linearGradient></defs>
        <circle cx="12" cy="12" r="12" fill="#0b75c9" stroke="none" /><path d="M0 11C1-3 23-4 24 10c0 6-9 7-10 3 3-3-1-8-6-7-4 0-7 2-8 5z" fill="url(#ea)" stroke="none" /><path d="M8 8c-5 5 0 14 8 13l6-3c-5 3-12-1-11-6 0-3 2-2 0-4z" fill="#0b4f9f" stroke="none" /><path d="M12 11c-2 5 4 9 11 6l1-2v3l-3 3c-6 0-12-4-11-8z" fill="#28301f" stroke="none" />
      </Svg></div>
      <div className="flex w-[44px] items-center justify-center"><Svg w={22} h={19}><path d="M0 0h8l2 3h11v15H0z" fill="#e3a10b" stroke="none" /><path d="M0 4h22v14H0z" fill="#ffd25a" stroke="none" /><path d="M4 10h14v8h-4v-4H8v4H4z" fill="#3195dc" stroke="none" /></Svg></div>
      <div className="flex w-[54px] items-center justify-center"><Svg w={24} h={22}><path d="M0 8 12 0l12 8v14H0z" fill="#0e5ea8" stroke="none" /><path d="M3 7h18v10H3z" fill="#fff" stroke="none" /><path d="m0 8 12 9L24 8v14H0z" fill="#35bdf2" stroke="none" /><path d="M0 22V8l18 14z" fill="#168cdb" stroke="none" /></Svg></div>
      <div className="flex w-[47px] items-center justify-center pr-[3px]"><Svg w={24}><circle cx="12" cy="12" r="12" fill="#fbc11a" stroke="none" /><path d="M12 12 1.600 6A12 12 0 0 1 22.400 6H12z" fill="#e5392d" stroke="none" /><path d="M1.600 6A12 12 0 0 0 12 24l5-9-9-1z" fill="#229c4c" stroke="none" /><circle cx="12" cy="12" r="5.700" fill="#fff" stroke="none" /><circle cx="12" cy="12" r="4.500" fill="#2679e8" stroke="none" /></Svg></div>
      <div className="flex w-[48px] items-center justify-center border-b-2 border-[#70b5f5] bg-[#50594b]"><Svg w={20} h={24}><path d="M11 0h9v24h-9z" fill="#c98b0a" stroke="none" /><path d="M6 6h9v18H6z" fill="#efbd28" stroke="none" /><path d="M0 12h9v12H0z" fill="#ffe36b" stroke="none" /></Svg></div>
      <div className="flex w-[50px] items-center justify-center"><Svg w={22}><path d="M2 2h12v13H2z" fill="#f9d51a" stroke="none" /><ellipse cx="8" cy="2.500" rx="6" ry="2.500" fill="#f2a35b" stroke="none" /><path d="M15 1h6v6M1 16v5h6" stroke="#43a047" strokeWidth="2" /><path d="m10 11 10 10M20 11l-9 10" stroke="#9b51b5" strokeWidth="2" /></Svg></div>
      <div className="ml-auto flex items-center">
        <Svg w={24} h={17}><path d="M1 1h19v15H1zM20 4h3v12h-3M4 4.500h13" stroke="#fff" strokeWidth="1.500" /><path d="M4 8h5v5H4zM12 8.500h5M12 12.500h5" stroke="#fff" strokeWidth="1.400" /></Svg>
        <Svg w={12} h={8} className="ml-[26px]"><path d="m1 7 5-5 5 5" stroke="#fff" strokeWidth="1.300" /></Svg>
        <Svg w={12} h={16} className="ml-[13px]"><path d="M1 4.500h7v7H1zM8 7l3-2v6L8 9M3 2q3-2 6 0M3 14q3 2 6 0" stroke="#fff" strokeWidth="1.200" /></Svg>
        <Svg w={17} h={12} className="ml-[9px]"><path d="M7 2h8v8H5M1 3h4v3H1zM2 0v3M4 0v3M3 6v4h3" stroke="#fff" strokeWidth="1.200" /><path d="M8 4h3v4H8zM15 4h2v4h-2z" fill="#fff" stroke="none" /></Svg>
        <Svg w={17} h={17} className="ml-[7px]"><circle cx="8" cy="8" r="7" stroke="#fff" /><path d="M1 6h14M1 11h8M8 1c-5 4-5 10 0 14M8 1c3 2 4 4 4 7" stroke="#fff" /><circle cx="12.500" cy="12.500" r="3.500" fill="#24251b" stroke="#fff" /><path d="m10 10 5 5" stroke="#fff" /></Svg>
        <Svg w={17} h={14} className="ml-[7px]"><path d="M1 5h2l4-4v12L3 9H1zM9 5q2 2 0 4M11 3q4 4 0 8M13 1q6 6 0 12" stroke="#fff" strokeWidth="1.100" /></Svg>
        <div className="ml-[8px] w-[60px] whitespace-nowrap pb-[1px] text-center text-[11.500px] leading-[18px] tracking-[-0.03em]">19:10<br />19/12/2024</div>
        <Svg w={17} h={17} className="ml-[17px] mr-[20px]"><path d="M1 1h15v12h-4.500L8.500 16l-3-3H1z" stroke="#fff" strokeWidth="1.200" /></Svg>
        <div className="mr-[3px] h-10 border-l border-[#4d4e46]" />
      </div>
    </footer>
  );
}

export default function App() {
  return (
    <div className="flex h-[768px] w-[1366px] flex-col overflow-hidden bg-[#f3f2f1] font-['Open_Sans','Noto_Sans',sans-serif]">
      <header className="flex h-[34px] shrink-0 items-center border-b border-[#302f3a] bg-[#3b3a39] text-[12px] tracking-[-0.022em] text-white">
        <Svg w={16} className="ml-[17px]"><path d="M.6.6h14.800v14.800H3L.6 13zM4 .6v5.500h8V.6M4 15V10h8v5M7 12v3" stroke="#fff" strokeWidth="1.200" /></Svg>
        <Svg w={14} h={16} className="ml-[15px]"><path d="M1 1v5.500h6M1 6.500C5 0 13 1 13 6c0 4-4 5-7 9" stroke="#797775" strokeWidth="1.200" /></Svg>
        <Svg w={14} h={16} className="ml-[16px] -scale-x-100"><path d="M1 1v5.500h6M1 6.500C5 0 13 1 13 6c0 4-4 5-7 9" stroke="#797775" strokeWidth="1.200" /></Svg>
        <div className="ml-[10px] flex w-[535px] items-center whitespace-nowrap pt-[7px]">Capstone Dataset Power Bi Visuals&nbsp;•&nbsp;Last saved: 11/4/2024 at 11:01 PM<Svg w={9} h={6} className="-mt-1 ml-[6px]"><path d="M0 0h9L4.500 6z" fill="#fff" stroke="none" /></Svg></div>
        <div className="flex h-6 w-[400px] shrink-0 items-center rounded-[2px] bg-[#d2d1cf] pl-[18px] text-[13px] text-[#21695b]"><Search flip c="#333" /><span className="ml-[11px] pt-px tracking-[0.01em]">Search</span></div>
        <span className="ml-[115px] w-[47px] pt-px">Sign in</span>
        <Svg w={20}><circle cx="10" cy="10" r="10" fill="#fff" stroke="none" /><circle cx="10" cy="6" r="2.600" stroke="#222" strokeWidth="1.500" /><path d="M4.500 11h11c0 7-11 7-11 0z" stroke="#222" strokeWidth="1.500" /></Svg>
        <Svg w={11} className="ml-[32px]"><path d="M0 5.500h11" stroke="#fff" /></Svg>
        <Svg w={11} className="ml-[33px]"><path d="M.5.5h10v10H.5z" stroke="#fff" /></Svg>
        <Svg w={11} className="ml-[33px]"><path d="m.5.5 10 10m0-10-10 10" stroke="#fff" strokeWidth="1.200" /></Svg>
      </header>
      <div className="flex h-[32px] shrink-0 bg-[#fafafa] pl-[23px] text-[14px] leading-[32px] tracking-[-0.035em] text-[#252423]">
        {tabs.map(([t, w]) => <div key={t} className={w}><span className={`inline-block h-[31px] ${t === "Home" ? "border-b-[3px] border-[#117865] font-semibold tracking-[-0.045em]" : ""}`}>{t}</span></div>)}
        <div className="ml-auto mr-[6px] mt-1 flex h-6 w-[84px] items-center rounded-[4px] bg-[#117865] pl-[7px] text-[12px] leading-6 text-white"><Svg w={16} h={15}><path d="M5 2H1v12h11V9M9 1l6 4.500L9 10V7.500Q5 7 3.500 11 4 4 9 4z" stroke="#fff" strokeWidth="1.200" /></Svg><span className="ml-[8px] mr-[4px] pt-px tracking-[-0.02em]">Share</span><Svg w={11} h={7}><path d="m1 1 4.500 4.500L10 1" stroke="#fff" strokeWidth="1.200" /></Svg></div>
      </div>
      <Ribbon />
      <main className="flex h-[543px] shrink-0">
        <Rail />
        <div className="w-[930px] shrink-0"><Canvas /><PageTabs /></div>
        <Panes />
      </main>
      <div className="flex h-6 shrink-0 items-center border-t border-[#dddbd9] bg-[#f3f2f1] pl-1 text-[12px] tracking-[-0.015em] text-[#484644]">
        <span className="mt-[3px]">Page 3 of 4</span>
        <Svg w={122} h={13} className="ml-auto"><path d="M9 6.500h99M59.500 3v7M116 6.500h7M119.500 3v7" stroke="#605e5c" /><path d="M2 7h4" stroke="#484644" strokeWidth="2" /><path d="M41.500 1v11" stroke="#484644" strokeWidth="3.500" /></Svg>
        <span className="ml-[14px] w-[42px] text-[11.500px]">69%</span>
        <Svg w={16} h={12} className="mr-[18px]"><path d="M.5.500h15v11H.5z" stroke="#777" /><path d="M3 5V3h3M10 3h3v2M3 7v2h3M10 9h3V7" stroke="#444" /></Svg>
      </div>
      <Taskbar />
    </div>
  );
}
